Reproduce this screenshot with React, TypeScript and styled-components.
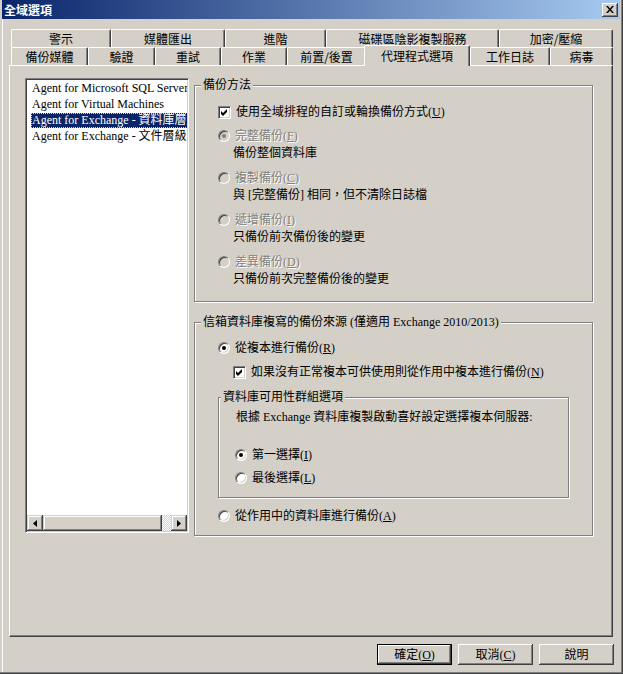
import React from 'react';
import styled, { createGlobalStyle } from 'styled-components';

const GlobalStyle = createGlobalStyle`
  html, body {
    margin: 0;
    padding: 0;
    background: #D4D0C8;
  }
  body {
    font-family: "Liberation Serif", "Noto Sans CJK TC", serif;
    font-size: 12px;
    color: #000;
  }
  * {
    box-sizing: border-box;
  }
`;

const Window = styled.div`
  width: 623px;
  height: 674px;
  background: #D4D0C8;
  display: flex;
  flex-direction: column;
  overflow: hidden;
  box-shadow: inset -1px -1px #404040, inset -2px -2px #808080,
    inset 2px 0 #D4D0C8, inset 3px 0 #fff;
`;

const TitleBar = styled.div`
  height: 19px;
  margin: 0 3px 0 2px;
  padding: 0 2px 0 2px;
  display: flex;
  align-items: center;
  justify-content: space-between;
  background: linear-gradient(to right, #0A246A, #A6CAF0);
`;

const Title = styled.span`
  color: #fff;
  font-weight: bold;
  font-size: 12px;
  line-height: 14px;
  font-family: "Noto Sans CJK TC", sans-serif;
`;

const CloseButton = styled.div`
  width: 16px;
  height: 14px;
  display: flex;
  align-items: center;
  justify-content: center;
  background: #D4D0C8;
  box-shadow: inset -1px -1px #404040, inset 1px 1px #fff,
    inset -2px -2px #808080, inset 2px 2px #D4D0C8;
`;

const Tabs = styled.div`
  margin-top: 10px;
  padding-left: 11px;
  display: flex;
  flex-direction: column;
`;

const TabRow = styled.div`
  display: flex;
  align-items: flex-end;
  height: 18px;
`;

const Tab = styled.div<{ $w: number; $active?: boolean }>`
  width: ${p => (p.$active ? p.$w + 2 : p.$w)}px;
  height: ${p => (p.$active ? 21 : 18)}px;
  margin-left: ${p => (p.$active ? -2 : 0)}px;
  margin-bottom: ${p => (p.$active ? -1 : 0)}px;
  position: relative;
  z-index: ${p => (p.$active ? 2 : 1)};
  display: flex;
  align-items: center;
  justify-content: center;
  padding-top: ${p => (p.$active ? 0 : 1)}px;
  background: #D4D0C8;
  border-left: 1px solid #fff;
  border-top: 1px solid #fff;
  border-right: 1px solid #404040;
  border-top-left-radius: 2px;
  border-top-right-radius: 2px;
  box-shadow: inset -1px 0 #808080;
  font-family: "Noto Sans CJK TC", sans-serif;
  line-height: 14px;
  white-space: nowrap;
`;

const Panel = styled.div`
  margin-left: 9px;
  width: 604px;
  height: 572px;
  display: flex;
  padding: 12px 0 0 15px;
  border-left: 1px solid #fff;
  border-top: 1px solid #fff;
  border-right: 1px solid #404040;
  border-bottom: 1px solid #404040;
  box-shadow: inset -1px -1px #808080;
`;

const ListBox = styled.div`
  width: 164px;
  height: 455px;
  display: flex;
  flex-direction: column;
  background: #fff;
  border-left: 1px solid #808080;
  border-top: 1px solid #808080;
  border-right: 1px solid #fff;
  border-bottom: 1px solid #fff;
  box-shadow: inset 1px 1px #404040, inset -1px -1px #D4D0C8;
  padding: 1px;
`;

const ListItems = styled.div`
  flex: 1;
  overflow: hidden;
`;

const ListItem = styled.div`
  height: 16px;
  padding-left: 4px;
  display: flex;
  align-items: center;
  white-space: nowrap;
`;

const ItemLabel = styled.span<{ $selected?: boolean }>`
  padding: 0 1px;
  line-height: 15px;
  color: ${p => (p.$selected ? '#fff' : '#000')};
  background: ${p => (p.$selected ? '#0A246A' : 'transparent')};
  outline: ${p => (p.$selected ? '1px dotted #D4D0C8' : 'none')};
  outline-offset: -1px;
`;

const HScroll = styled.div`
  height: 16px;
  display: flex;
`;

const ScrollButton = styled.div`
  width: 16px;
  height: 16px;
  display: flex;
  align-items: center;
  justify-content: center;
  background: #D4D0C8;
  box-shadow: inset -1px -1px #404040, inset 1px 1px #D4D0C8,
    inset -2px -2px #808080, inset 2px 2px #fff;
`;

const Thumb = styled.div`
  width: 119px;
  height: 16px;
  background: #D4D0C8;
  box-shadow: inset -1px -1px #404040, inset 1px 1px #D4D0C8,
    inset -2px -2px #808080, inset 2px 2px #fff;
`;

const Track = styled.div`
  flex: 1;
  background: repeating-conic-gradient(#fff 0 25%, #D4D0C8 0 50%) 0 0 / 2px 2px;
`;

const RightColumn = styled.div`
  margin-left: 5px;
  width: 399px;
  display: flex;
  flex-direction: column;
`;

const Group = styled.fieldset<{ $mt?: number; $w?: number }>`
  margin: ${p => p.$mt ?? 0}px 0 0 0;
  padding: 0;
  min-width: 0;
  width: ${p => (p.$w ? `${p.$w}px` : 'auto')};
  border: 1px solid #808080;
  box-shadow: inset 1px 1px #fff, 1px 1px #fff;
`;

const Legend = styled.legend<{ $ml: number }>`
  margin-left: ${p => p.$ml}px;
  padding: 0 2px;
  line-height: 14px;
  background: #D4D0C8;
`;

const GroupBody = styled.div<{ $pt: number; $pb: number; $pl: number }>`
  display: flex;
  flex-direction: column;
  align-items: flex-start;
  padding: ${p => p.$pt}px 0 ${p => p.$pb}px ${p => p.$pl}px;
`;

const Row = styled.div<{ $mt?: number; $ml?: number; $disabled?: boolean }>`
  height: 16px;
  margin-top: ${p => p.$mt ?? 0}px;
  margin-left: ${p => p.$ml ?? 0}px;
  display: flex;
  align-items: center;
  white-space: nowrap;
  line-height: 16px;
  color: ${p => (p.$disabled ? '#808080' : '#000')};
  text-shadow: ${p => (p.$disabled ? '1px 1px 0 #fff' : 'none')};
`;

const CheckBox = styled.div`
  width: 13px;
  height: 13px;
  margin-right: 5px;
  flex-shrink: 0;
  display: flex;
  align-items: center;
  justify-content: center;
  background: #fff;
  border-left: 1px solid #808080;
  border-top: 1px solid #808080;
  border-right: 1px solid #fff;
  border-bottom: 1px solid #fff;
  box-shadow: inset 1px 1px #404040, inset -1px -1px #D4D0C8;
`;

const Radio = styled.div<{ $disabled?: boolean }>`
  width: 12px;
  height: 12px;
  margin-right: 5px;
  flex-shrink: 0;
  border-radius: 50%;
  display: flex;
  align-items: center;
  justify-content: center;
  background: ${p => (p.$disabled ? '#D4D0C8' : '#fff')};
  border: 1px solid;
  border-color: #808080 #fff #fff #808080;
  box-shadow: inset 1px 1px #404040, inset -1px -1px #D4D0C8;
`;

const Dot = styled.div<{ $disabled?: boolean }>`
  width: 4px;
  height: 4px;
  border-radius: 50%;
  background: ${p => (p.$disabled ? '#808080' : '#000')};
`;

const Key = styled.span`
  text-decoration: underline;
`;

const ButtonRow = styled.div`
  display: flex;
  justify-content: flex-end;
  gap: 6px;
  margin-top: 7px;
  padding-right: 9px;
`;

const Button = styled.div<{ $default?: boolean }>`
  width: 75px;
  height: 21px;
  display: flex;
  align-items: center;
  justify-content: center;
  background: #D4D0C8;
  border: 1px solid ${p => (p.$default ? '#000' : 'transparent')};
  box-shadow: ${p =>
    p.$default
      ? 'inset -1px -1px #404040, inset 1px 1px #fff, inset -2px -2px #808080'
      : 'inset -1px -1px #404040, inset 1px 1px #fff, inset -2px -2px #808080'};
  ${p => (!p.$default ? 'border: none; box-shadow: inset -1px -1px #404040, inset 1px 1px #fff, inset -2px -2px #808080, inset 2px 2px #D4D0C8;' : '')}
  line-height: 14px;
`;

const upperTabs = [
  { label: '警示', w: 100 },
  { label: '媒體匯出', w: 114 },
  { label: '進階', w: 101 },
  { label: '磁碟區陰影複製服務', w: 173 },
  { label: '加密/壓縮', w: 114 },
];

const lowerTabs = [
  { label: '備份媒體', w: 77 },
  { label: '驗證', w: 67 },
  { label: '重試', w: 66 },
  { label: '作業', w: 66 },
  { label: '前置/後置', w: 79 },
  { label: '代理程式選項', w: 104, active: true },
  { label: '工作日誌', w: 80 },
  { label: '病毒', w: 63 },
];

const agents = [
  'Agent for Microsoft SQL Server',
  'Agent for Virtual Machines',
  'Agent for Exchange - 資料庫層級',
  'Agent for Exchange - 文件層級',
];

function Check() {
  return (
    <CheckBox>
      <svg width="7" height="7" viewBox="0 0 7 7">
        <polygon points="0,2 2,4 6,0 6,3 2,7 0,5" fill="#000" />
      </svg>
    </CheckBox>
  );
}

function Arrow({ dir }: { dir: 'left' | 'right' }) {
  return (
    <svg width="4" height="7" viewBox="0 0 4 7">
      {dir === 'left' ? (
        <polygon points="4,0 4,7 0,3.5" fill="#000" />
      ) : (
        <polygon points="0,0 0,7 4,3.5" fill="#000" />
      )}
    </svg>
  );
}

const methods = [
  { label: '完整備份', key: 'F', desc: '備份整個資料庫', checked: true },
  { label: '複製備份', key: 'C', desc: '與 [完整備份] 相同，但不清除日誌檔' },
  { label: '遞增備份', key: 'I', desc: '只備份前次備份後的變更' },
  { label: '差異備份', key: 'D', desc: '只備份前次完整備份後的變更' },
];

export default function App() {
  return (
    <>
      <GlobalStyle />
      <Window>
        <TitleBar>
          <Title>全域選項</Title>
          <CloseButton>
            <svg width="8" height="7" viewBox="0 0 8 7">
              <path d="M0 0h2l2 2.5L6 0h2L5 3.5 8 7H6L4 4.5 2 7H0l3-3.5z" fill="#000" />
            </svg>
          </CloseButton>
        </TitleBar>

        <Tabs>
          <TabRow>
            {upperTabs.map(t => (
              <Tab key={t.label} $w={t.w}>{t.label}</Tab>
            ))}
          </TabRow>
          <TabRow>
            {lowerTabs.map(t => (
              <Tab key={t.label} $w={t.w} $active={t.active}>{t.label}</Tab>
            ))}
          </TabRow>
        </Tabs>

        <Panel>
          <ListBox>
            <ListItems>
              {agents.map((a, i) => (
                <ListItem key={a}>
                  <ItemLabel $selected={i === 2}>{a}</ItemLabel>
                </ListItem>
              ))}
            </ListItems>
            <HScroll>
              <ScrollButton><Arrow dir="left" /></ScrollButton>
              <Thumb />
              <Track />
              <ScrollButton><Arrow dir="right" /></ScrollButton>
            </HScroll>
          </ListBox>

          <RightColumn>
            <Group>
              <Legend $ml={6}>備份方法</Legend>
              <GroupBody $pt={12} $pb={14} $pl={23}>
                <Row>
                  <Check />
                  使用全域排程的自訂或輪換備份方式(<Key>U</Key>)
                </Row>
                {methods.map((m, i) => (
                  <React.Fragment key={m.key}>
                    <Row $mt={i === 0 ? 8 : 9} $disabled>
                      <Radio $disabled>{m.checked && <Dot $disabled />}</Radio>
                      {m.label}(<Key>{m.key}</Key>)
                    </Row>
                    <Row $mt={1} $ml={15}>{m.desc}</Row>
                  </React.Fragment>
                ))}
              </GroupBody>
            </Group>

            <Group $mt={13}>
              <Legend $ml={6}>信箱資料庫複寫的備份來源 (僅適用 Exchange 2010/2013)</Legend>
              <GroupBody $pt={11} $pb={11} $pl={23}>
                <Row>
                  <Radio><Dot /></Radio>
                  從複本進行備份(<Key>R</Key>)
                </Row>
                <Row $mt={8} $ml={15}>
                  <Check />
                  如果沒有正常複本可供使用則從作用中複本進行備份(<Key>N</Key>)
                </Row>
                <Group $mt={10} $w={351}>
                  <Legend $ml={2}>資料庫可用性群組選項</Legend>
                  <GroupBody $pt={5} $pb={11} $pl={16}>
                    <Row $ml={1}>根據 Exchange 資料庫複製啟動喜好設定選擇複本伺服器:</Row>
                    <Row $mt={22}>
                      <Radio><Dot /></Radio>
                      第一選擇(<Key>I</Key>)
                    </Row>
                    <Row $mt={7}>
                      <Radio />
                      最後選擇(<Key>L</Key>)
                    </Row>
                  </GroupBody>
                </Group>
                <Row $mt={10}>
                  <Radio />
                  從作用中的資料庫進行備份(<Key>A</Key>)
                </Row>
              </GroupBody>
            </Group>
          </RightColumn>
        </Panel>

        <ButtonRow>
          <Button $default>確定(<Key>O</Key>)</Button>
          <Button>取消(<Key>C</Key>)</Button>
          <Button>說明</Button>
        </ButtonRow>
      </Window>
    </>
  );
}
